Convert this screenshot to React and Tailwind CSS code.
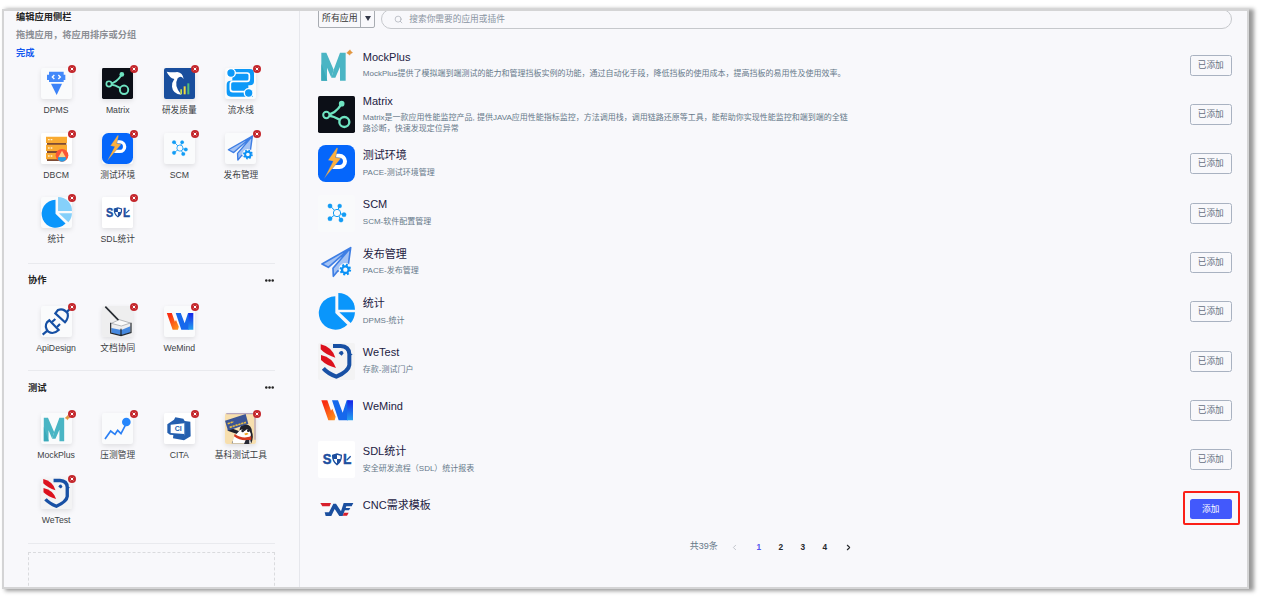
import React from "react";
import { Search, ChevronLeft, ChevronRight } from "lucide-react";

function MockPlusArt() {
  return (
    <g>
      <path d="M10 17H25L47 68L40 92L27 62V101H10Z" fill="#4ab5c4" />
      <path d="M66 17H83V101H66V60L52 92H40L47 68Z" fill="#4ab5c4" />
      <path d="M10 50L28 101H10Z" fill="#3aa9b9" />
      <path d="M96 8L99 13L104 17L98 20L95 25L91 21L86 18L91 13Z" fill="#e2963f" stroke="#e2963f" strokeWidth="1" />
    </g>
  );
}

function MatrixArt() {
  return (
    <g>
      <rect width="111" height="111" rx="5" fill="#0c0f17" />
      <path d="M28 56Q52 53 70 25M28 58Q48 60 68 73" stroke="#6fe3c1" strokeWidth="7" fill="none" />
      <circle cx="71" cy="23" r="8.500" fill="#6fe3c1" />
      <circle cx="25" cy="57" r="9.500" fill="#0c0f17" stroke="#6fe3c1" strokeWidth="6" />
      <circle cx="79" cy="78" r="15" fill="#0c0f17" stroke="#6fe3c1" strokeWidth="7" />
    </g>
  );
}

function PaceArt() {
  return (
    <g>
      <rect width="111" height="111" rx="23" fill="#0566fb" />
      <path d="M54 32H64A17 17 0 0 1 64 66H42" stroke="#fff" strokeWidth="12" fill="none" />
      <path d="M56 8L30 46L45 49L18 101L69 40L53 37L60 9Z" fill="#fcb03f" stroke="#0566fb" strokeWidth="1" />
    </g>
  );
}

function ScmArt() {
  return (
    <g fill="#119cf5" stroke="#119cf5">
      <path d="M57 54L37 33M57 54L64 33M57 54L78 59M57 54L69 75M57 54L36 71" strokeWidth="3" />
      <circle cx="36" cy="33" r="6.500" />
      <circle cx="65" cy="33" r="6" />
      <circle cx="78" cy="59" r="6.500" />
      <circle cx="69" cy="75" r="6.500" />
      <circle cx="36" cy="71" r="6.500" />
      <circle cx="57" cy="54" r="11" fill="#f8f9fb" strokeWidth="3" />
    </g>
  );
}

function PlaneArt() {
  return (
    <g strokeLinejoin="round">
      <path d="M98 11L12 60L31 70L98 11L45 73L46 97L60 80L88 84Z" fill="#a3c2f4" stroke="#3e7ee4" strokeWidth="5" />
      <circle cx="82" cy="77" r="20" fill="#f8f9fb" />
      <circle cx="82" cy="77" r="14" fill="none" stroke="#0b91f5" strokeWidth="7" strokeDasharray="5.5 5.5" />
      <circle cx="82" cy="77" r="10" fill="none" stroke="#0b91f5" strokeWidth="7" />
    </g>
  );
}

function PieArt({ soft }) {
  const slice = soft ? "#85d0fa" : "#0a96fb";
  return (
    <g>
      <path d="M52 10A50 50 0 1 0 88 95L52 60Z" fill="#0a96fb" />
      <path d="M61 0A50 50 0 0 1 111 50H61Z" fill={slice} />
      <path d="M64 58H111Q110 77 98 90Z" fill={slice} />
    </g>
  );
}

function WeTestArt() {
  return (
    <g>
      <rect width="111" height="111" rx="6" fill="#f3f3f4" />
      <path d="M45 9H68Q93 10 94 33V66Q92 85 55 101Q29 91 16 76" fill="none" stroke="#1850a4" strokeWidth="12" />
      <path d="M62 31Q66 22 73 24L77 31L71 38Z" fill="#1850a4" />
      <path d="M92 30L104 34L92 42Z" fill="#1850a4" />
      <path d="M8 4Q42 12 52 44Q24 36 8 19Z" fill="#dc111d" />
      <path d="M9 36Q44 44 54 75Q26 68 9 51Z" fill="#dc111d" />
    </g>
  );
}

function WeMindArt() {
  return (
    <g>
      <defs>
        <linearGradient id="flame" x1="0" y1="0" x2="1" y2="1">
          <stop offset="0.2" stopColor="#f92e12" />
          <stop offset="1" stopColor="#ff9b1c" />
        </linearGradient>
        <linearGradient id="bar" x1="0" y1="0" x2="0" y2="1">
          <stop offset="0" stopColor="#1524e8" />
          <stop offset="1" stopColor="#24a0ee" />
        </linearGradient>
      </defs>
      <path d="M10 25H28L39 56L43 50L53 74L50 85H31Z" fill="url(#flame)" />
      <path d="M42 25H60L74 62L86 25H95L90 85H62Z" fill="#1668ec" />
      <path d="M88 25H105V85H87Z" fill="url(#bar)" />
    </g>
  );
}

function SdlArt() {
  return (
    <g>
      <rect width="111" height="111" rx="6" fill="#fff" />
      <text x="14" y="70" fontSize="44" fontWeight="700" fill="#1d4f9f" stroke="#1d4f9f" strokeWidth="1.500" className="font-['Liberation_Sans',sans-serif]" textLength="26" lengthAdjust="spacingAndGlyphs">S</text>
      <path d="M44 43L57 39L70 43Q71 61 57 71Q43 61 44 43Z" fill="#fff" stroke="#1d4f9f" strokeWidth="4" />
      <path d="M57 39V54H45L44 42ZM57 54H69Q67 64 57 71Z" fill="#1d4f9f" />
      <text x="75" y="70" fontSize="44" fontWeight="700" fill="#1d4f9f" stroke="#1d4f9f" strokeWidth="1.500" className="font-['Liberation_Sans',sans-serif]" textLength="25" lengthAdjust="spacingAndGlyphs">L</text>
      <path d="M86 58L98 46" stroke="#1d4f9f" strokeWidth="4" />
    </g>
  );
}

function CncArt() {
  return (
    <g>
      <path d="M7 36H39L35 46H13Z" fill="#d81f2b" />
      <path d="M20 64H33L46 38H54L69 61L77 36H106L101 46H85L74 75H64L50 54L40 75H23Z" fill="#1b4f9f" />
      <path d="M80 51H97L93 58H78Z" fill="#1b4f9f" />
      <path d="M78 65H92L87 74H74Z" fill="#d81f2b" />
    </g>
  );
}

function DpmsArt() {
  return (
    <g>
      <path d="M24 11H68V20H73V36H68V42H24V36H18V20H24Z" fill="#4389fa" />
      <path d="M40 21L34 27L40 33M52 21L58 27L52 33" stroke="#fff" strokeWidth="4" fill="none" />
      <path d="M30 47H63L47 81Z" fill="#3c83f8" />
    </g>
  );
}

function QualityArt() {
  return (
    <g>
      <rect width="93" height="93" rx="6" fill="#194e9d" />
      <path d="M8 11Q24 14 40 12Q56 14 59 33Q50 21 41 31Q28 54 52 80Q26 77 24 56Q23 44 31 33Q16 29 8 11Z" fill="#fff" />
      <path d="M49 64H54V79H49Z" fill="#c5df48" />
      <path d="M59 55H65V79H59Z" fill="#f2d83f" />
      <path d="M70 46H76V79H70Z" fill="#51bd78" />
    </g>
  );
}

function PipelineArt() {
  return (
    <g>
      <path d="M14 3H74Q87 3 87 16V40Q87 52 75 52H70V66H84V86H18Q5 86 5 73V50Q5 38 17 38H22V24H8V9Z" fill="#0d99f8" />
      <path d="M28 15H66Q73 15 73 22V32Q73 40 66 40H24Q16 40 16 48V63Q16 71 24 71H60" fill="none" stroke="#fff" strokeWidth="5" />
      <circle cx="18" cy="15" r="13" fill="#0d99f8" stroke="#fff" strokeWidth="4" />
      <circle cx="71" cy="75" r="13" fill="#0d99f8" stroke="#fff" strokeWidth="4" />
    </g>
  );
}

function DbcmArt() {
  return (
    <g>
      <rect width="93" height="93" rx="6" fill="#fff" />
      <path d="M18 26H76V37H18ZM18 51H76V62H18ZM18 75H60V84H18Z" fill="#7d4b35" />
      <path d="M15 11H78V30H15ZM15 35H78V54H15ZM15 60H78V79H15Z" fill="#f9aa31" />
      <path d="M21 20H34M21 45H34M21 69H34" stroke="#fff2d0" strokeWidth="4" strokeDasharray="5 3" />
      <circle cx="63" cy="67" r="19" fill="#fa5636" />
      <path d="M63 53L52 73H74Z" fill="#ffd28a" />
      <path d="M51 73H75V80Q63 92 51 80Z" fill="#279de5" />
    </g>
  );
}

function ApiArt() {
  return (
    <g fill="none" stroke="#1650a4" strokeWidth="6.500">
      <path d="M5 86L20 73M75 20L88 8" />
      <path d="M25 43L53 72Q37 87 22 77Q9 62 18 49Z" />
      <path d="M43 22L72 49Q83 37 80 22Q67 5 51 12Z" />
      <path d="M33 48L43 39M48 63L57 54" />
    </g>
  );
}

function DocArt() {
  return (
    <g>
      <rect width="93" height="93" rx="6" fill="#eeeeef" />
      <path d="M10 2L50 43" stroke="#262b31" strokeWidth="5" />
      <path d="M28 52L52 41L85 51L58 60Z" fill="#fafafa" stroke="#777b80" strokeWidth="1.500" />
      <path d="M28 66L58 72L85 61V80L58 88L28 82Z" fill="#4588df" />
      <path d="M26 50V81L57 89L87 80V50M57 68V88" fill="none" stroke="#22262c" strokeWidth="3.500" />
    </g>
  );
}

function StressArt() {
  return (
    <g>
      <path d="M9 78L26 54L39 64L47 52L57 62L73 31" stroke="#2b80f5" strokeWidth="5" fill="none" />
      <circle cx="73" cy="27" r="13" fill="#2586fc" />
    </g>
  );
}

function CitaArt() {
  return (
    <g>
      <rect width="93" height="93" rx="6" fill="#fff" />
      <path d="M10 34L30 20L34 13L58 17L62 24L79 26L80 70L60 82L27 76L28 66L18 65L10 59Z" fill="#245faf" />
      <path d="M20 35L61 31V63L20 60Z" fill="#fff" />
      <path d="M62 29V67" stroke="#6f97cf" strokeWidth="2" />
      <text x="32" y="55" fontSize="21" fontWeight="700" fill="#245faf" className="font-['Liberation_Sans',sans-serif]">CI</text>
    </g>
  );
}

function PenguinArt() {
  return (
    <g>
      <rect width="93" height="93" rx="6" fill="#f7dfae" />
      <path d="M4 2H90V80" fill="none" stroke="#b7a6bd" strokeWidth="4" />
      <path d="M20 91L34 62L8 53L10 42L43 55Q44 34 62 34Q80 36 81 57Q87 70 79 91Z" fill="#20222c" />
      <path d="M38 59Q49 42 59 55Q68 42 75 57Q81 66 74 74L78 91H22Q24 70 38 59Z" fill="#fff" />
      <circle cx="53" cy="54" r="4" fill="#20222c" />
      <circle cx="70" cy="53" r="4" fill="#20222c" />
      <path d="M57 62L66 59L71 63L62 67Z" fill="#f1a31c" />
      <path d="M29 63Q51 79 79 70V80Q48 87 27 70Z" fill="#d43a20" />
      <path d="M62 81L57 93H73V81Z" fill="#272833" />
      <path d="M0 23L62 3L70 32L9 53Z" fill="#3b5596" />
      <path d="M8 32L26 26M14 43L63 28" stroke="#e6bb43" strokeWidth="5" strokeDasharray="7 2" />
    </g>
  );
}

const ART = {
  mock: [MockPlusArt, 111],
  matrix: [MatrixArt, 111],
  pace: [PaceArt, 111],
  scm: [ScmArt, 111],
  plane: [PlaneArt, 111],
  pie: [PieArt, 111],
  wetest: [WeTestArt, 111],
  wemind: [WeMindArt, 111],
  sdl: [SdlArt, 111],
  cnc: [CncArt, 111],
  dpms: [DpmsArt, 93],
  quality: [QualityArt, 93],
  pipeline: [PipelineArt, 93],
  dbcm: [DbcmArt, 93],
  api: [ApiArt, 93],
  doc: [DocArt, 93],
  stress: [StressArt, 93],
  cita: [CitaArt, 93],
  penguin: [PenguinArt, 93],
};

function AppIcon({ name, soft }) {
  const [Art, size] = ART[name];
  return (
    <svg viewBox={`0 0 ${size} ${size}`} className="block size-full">
      <Art soft={soft} />
    </svg>
  );
}

function Tile({ icon, label }) {
  return (
    <div className="flex h-[64.6px] flex-col items-center">
      <div className="relative size-[31px] shrink-0 rounded-[2px] bg-[#fafbfc] shadow-[0_2px_5px_rgba(0,0,0,0.10)]">
        <AppIcon name={icon} soft />
        <svg viewBox="0 0 8 8" className="absolute -top-[3px] left-[27.500px] size-2">
          <circle cx="4" cy="4" r="4" fill="#c4282d" />
          <path d="M2.700 2.700L5.300 5.300M5.300 2.700L2.700 5.300" stroke="#fff" strokeWidth="1" />
        </svg>
      </div>
      <div className="mt-1 text-[8.7px] leading-[14px] whitespace-nowrap text-[#3c3f44]">{label}</div>
    </div>
  );
}

function TileGrid({ items }) {
  return (
    <div className="-ml-[2.700px] grid w-[246.400px] grid-cols-4">
      {items.map(([icon, label]) => (
        <Tile key={label} icon={icon} label={label} />
      ))}
    </div>
  );
}

function Group({ title, items }) {
  return (
    <section className="border-t border-[#e9eaee] pt-[8px]">
      <div className="mb-4 flex h-[18px] items-center justify-between">
        <h2 className="pt-px text-[9.3px] font-bold text-[#222]">{title}</h2>
        <svg viewBox="0 0 9 3" className="mr-[1px] mb-px h-[3px] w-[9px]" fill="#222">
          <circle cx="1.300" cy="1.500" r="1.250" />
          <circle cx="4.500" cy="1.500" r="1.250" />
          <circle cx="7.700" cy="1.500" r="1.250" />
        </svg>
      </div>
      <TileGrid items={items} />
    </section>
  );
}

const MAIN_APPS = [
  ["dpms", "DPMS"],
  ["matrix", "Matrix"],
  ["quality", "研发质量"],
  ["pipeline", "流水线"],
  ["dbcm", "DBCM"],
  ["pace", "测试环境"],
  ["scm", "SCM"],
  ["plane", "发布管理"],
  ["pie", "统计"],
  ["sdl", "SDL统计"],
];

const COLLAB_APPS = [
  ["api", "ApiDesign"],
  ["doc", "文档协同"],
  ["wemind", "WeMind"],
];

const TEST_APPS = [
  ["mock", "MockPlus"],
  ["stress", "压测管理"],
  ["cita", "CITA"],
  ["penguin", "基科测试工具"],
  ["wetest", "WeTest"],
];

const LIST = [
  ["mock", "MockPlus", "MockPlus提供了模拟端到端测试的能力和管理挡板实例的功能，通过自动化手段，降低挡板的使用成本，提高挡板的易用性及使用效率。"],
  ["matrix", "Matrix", "Matrix是一款应用性能监控产品, 提供JAVA应用性能指标监控，方法调用栈，调用链路还原等工具，能帮助你实现性能监控和端到端的全链\n路诊断，快速发现定位异常"],
  ["pace", "测试环境", "PACE-测试环境管理"],
  ["scm", "SCM", "SCM-软件配置管理"],
  ["plane", "发布管理", "PACE-发布管理"],
  ["pie", "统计", "DPMS-统计"],
  ["wetest", "WeTest", "存款-测试门户"],
  ["wemind", "WeMind", ""],
  ["sdl", "SDL统计", "安全研发流程（SDL）统计报表"],
  ["cnc", "CNC需求模板", ""],
];

function Sidebar() {
  return (
    <aside className="w-[296px] shrink-0 overflow-hidden border-r border-[#e6e7ec] pr-[24px] pl-[24px]">
      <div className="-mt-[4px] -ml-3 text-[9.25px] leading-[18px] font-bold">
        <h1 className="pt-[0.500px] text-[#222]">编辑应用侧栏</h1>
        <p className="text-[#8b8e94]">拖拽应用，将应用排序或分组</p>
        <button className="block text-[#1458f0]">完成</button>
      </div>
      <div className="mt-[6.500px] mb-[1px]">
        <TileGrid items={MAIN_APPS} />
      </div>
      <Group title="协作" items={COLLAB_APPS} />
      <Group title="测试" items={TEST_APPS} />
      <div className="border-t border-[#e9eaee]" />
      <div className="mt-[8.500px] h-20 border border-dashed border-[#dadbde]" />
    </aside>
  );
}

function ListRow({ icon, title, desc, added }) {
  return (
    <div className="flex h-[49.330px] items-center">
      <div className={icon === "scm" ? "size-[37px] shrink-0 rounded-[2px] bg-[#f9fafb]" : "size-[37px] shrink-0"}>
        <AppIcon name={icon} />
      </div>
      <div className="ml-[7.500px] flex-1 pb-[2px]">
        <div className={desc ? "text-[11px] leading-[17px] text-[#1c2142]" : "pb-[5px] text-[11px] leading-[17px] text-[#1c2142]"}>{title}</div>
        {desc && <p className="mt-[3.500px] text-[8px] leading-[10.6px] whitespace-pre text-[#66788a]">{desc}</p>}
      </div>
      {added ? (
        <button className="h-[21px] w-[42.500px] rounded-[2.500px] border border-[#a9b2c1] text-[8.7px] leading-none text-[#66707f]">已添加</button>
      ) : (
        <div className="relative">
          <button className="block h-5 w-[42.500px] rounded-[2.500px] bg-[#4259fc] text-[8.7px] leading-none text-white">添加</button>
          <div className="absolute -top-[8px] -left-[6.500px] h-[34px] w-[57px] rounded-[2px] border-2 border-[#fb2018]" />
        </div>
      )}
    </div>
  );
}

function Pagination() {
  return (
    <nav className="mt-[3.500px] ml-[371.500px] flex h-5 items-center text-[8.3px] font-bold text-[#26282c]">
      <span className="w-[40px] text-[9px] font-normal text-[#66788a]">共39条</span>
      <ChevronLeft size={9} color="#b0b5bc" />
      <span className="ml-[9px] w-[22px] text-center text-[#5556ee]">1</span>
      <span className="w-[22px] text-center">2</span>
      <span className="w-[22px] text-center">3</span>
      <span className="w-[22px] text-center">4</span>
      <ChevronRight size={9} className="ml-[8px]" strokeWidth={3} />
    </nav>
  );
}

export default function App() {
  return (
    <div className="h-[598px] w-[1264px] overflow-hidden bg-white pt-[9px] pl-[2px] font-['Liberation_Sans','Noto_Sans_CJK_SC',sans-serif]">
      <div className="flex h-[580px] w-[1247px] overflow-hidden border-2 border-[#d4d4d5] bg-[#f8f8fb] shadow-[4px_1px_4px_1px_rgba(0,0,0,0.4)]">
        <Sidebar />
        <main className="flex-1 pr-[15px] pl-[18.300px]">
          <div className="flex h-[29.400px] items-start">
            <div className="-mt-[2px] flex h-[19px] w-[57px] rounded-[2px] border border-[#a8acb2] text-[8.9px] text-[#333]">
              <span className="flex flex-1 items-center justify-center pt-px whitespace-nowrap">所有应用</span>
              <span className="flex w-[14px] items-center justify-center border-l border-[#a8acb2]">
                <svg viewBox="0 0 6 5" className="h-[5px] w-[6px]">
                  <path d="M0 0H6L3 5Z" fill="#333849" />
                </svg>
              </span>
            </div>
            <div className="-mt-[2px] ml-[6px] flex h-5 flex-1 items-center rounded-full border border-[#c6c8cc] pl-[12px] text-[8.7px] text-[#8893a1]">
              <Search size={9} color="#a4a9b1" strokeWidth={1.8} />
              <span className="ml-[6px] pt-px">搜索你需要的应用或插件</span>
            </div>
          </div>
          {LIST.map(([icon, title, desc], i) => (
            <ListRow key={title} icon={icon} title={title} desc={desc} added={i < LIST.length - 1} />
          ))}
          <Pagination />
        </main>
      </div>
    </div>
  );
}
